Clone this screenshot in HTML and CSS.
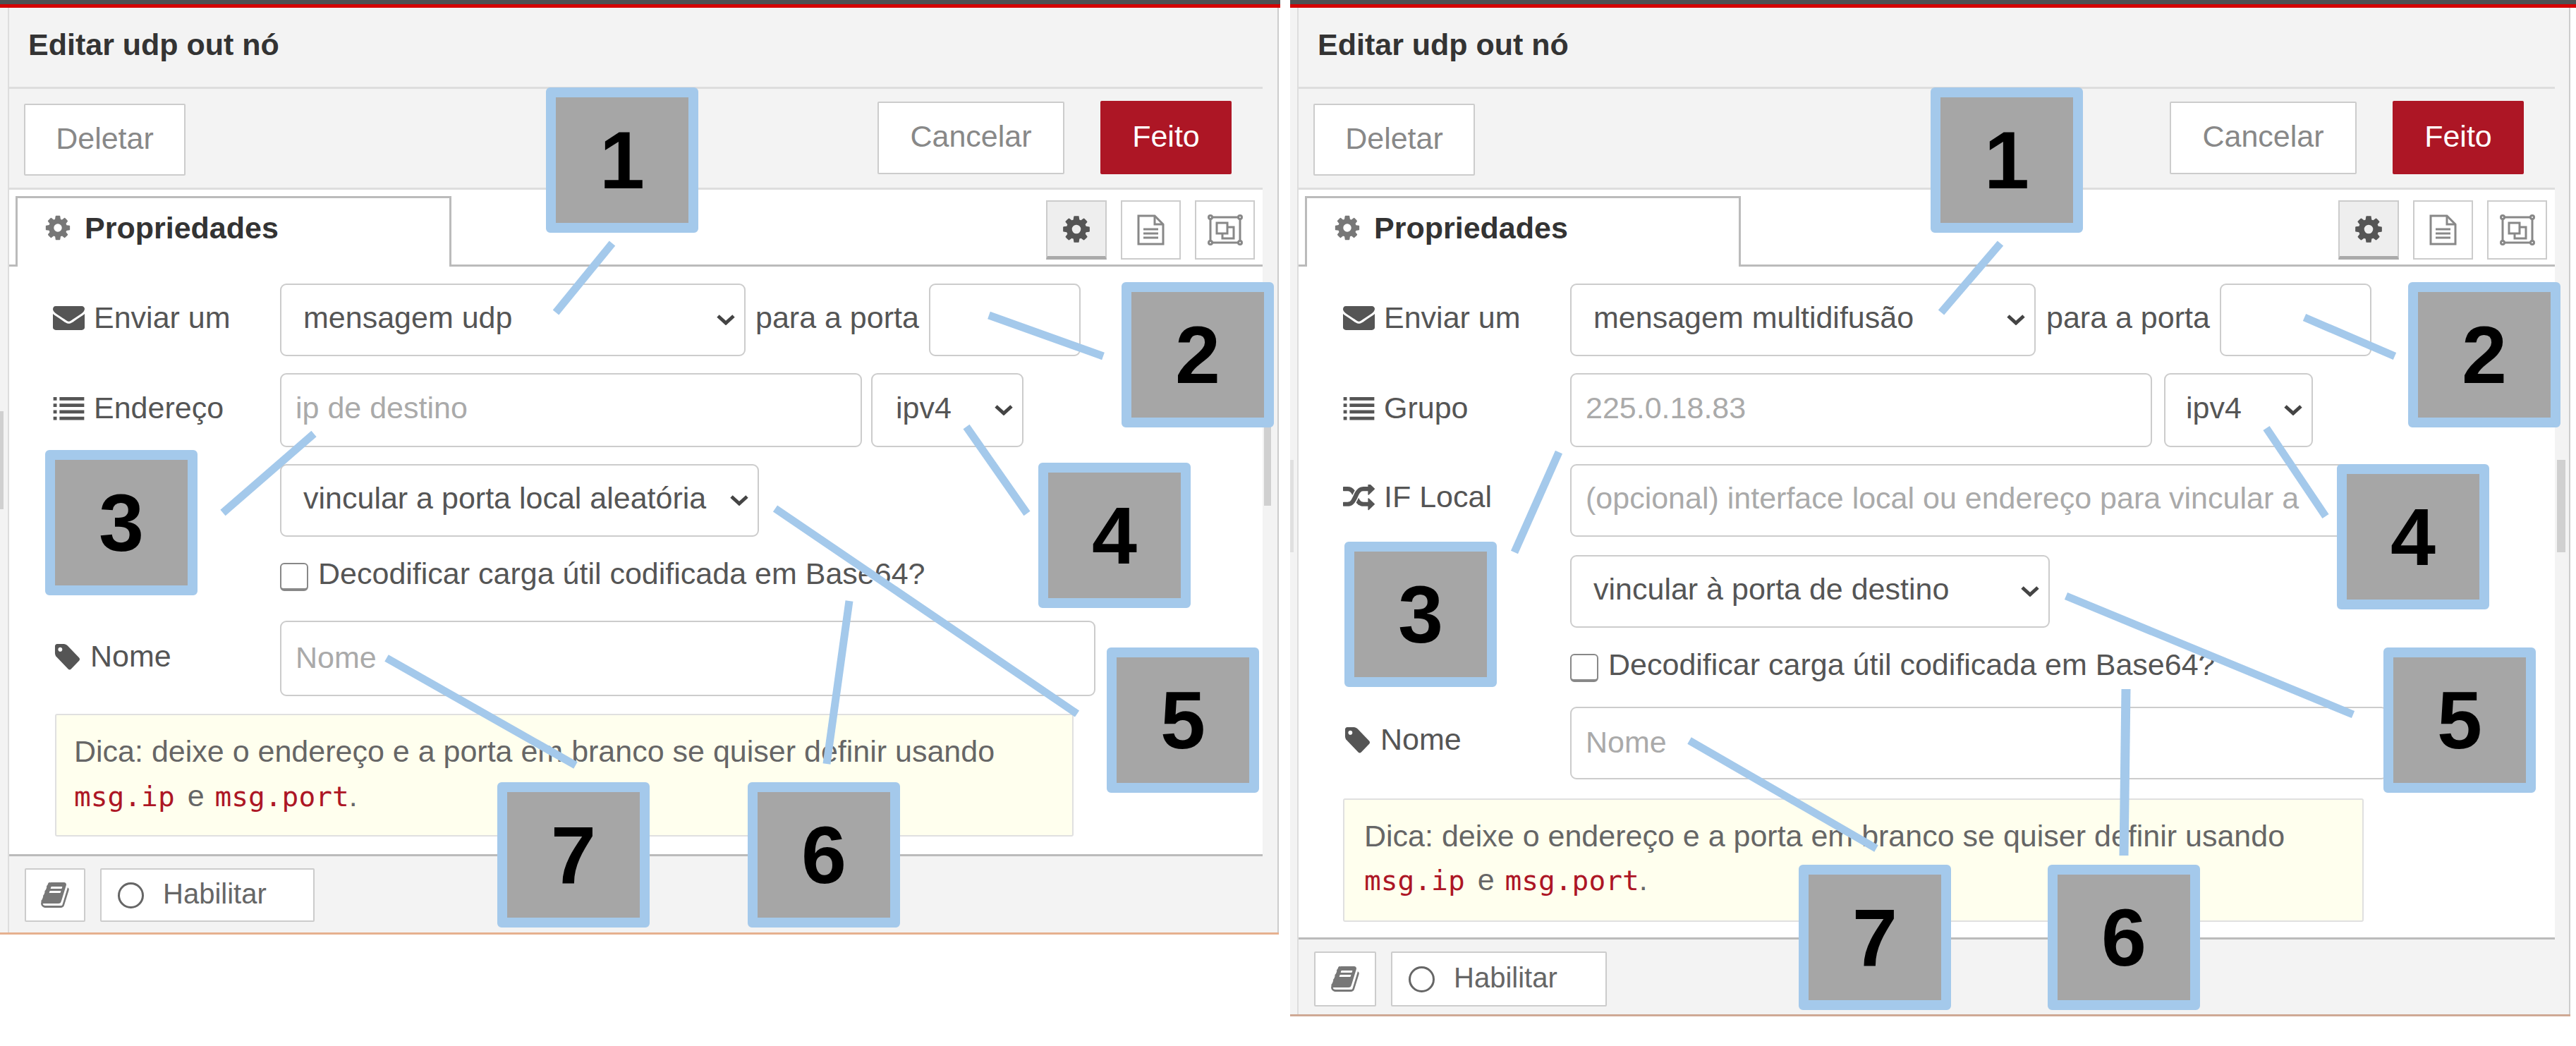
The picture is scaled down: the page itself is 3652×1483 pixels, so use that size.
FILE: index.html
```html
<!DOCTYPE html>
<html lang="pt">
<head>
<meta charset="utf-8">
<title>Editar udp out nó</title>
<link rel="stylesheet" href="styles.css">
</head>
<body>
<svg class="defs" width="0" height="0" aria-hidden="true">
  <symbol id="i-cog" viewBox="0 0 1792 1792"><path d="M1152 896q0-106-75-181t-181-75-181 75-75 181 75 181 181 75 181-75 75-181zm512-109v222q0 12-8 23t-20 13l-185 28q-19 54-39 91 35 50 107 138 10 12 10 25t-9 23q-27 37-99 108t-94 71q-12 0-26-9l-138-108q-44 23-91 38-16 136-29 186-7 28-36 28h-222q-14 0-24.500-8.500t-11.500-21.500l-28-184q-49-16-90-37l-141 107q-10 9-25 9-14 0-25-11-126-114-165-168-7-10-7-23 0-12 8-23 15-21 51-66.500t54-70.500q-27-50-41-99l-183-27q-13-2-21-12.500t-8-23.500v-222q0-12 8-23t19-13l186-28q14-46 39-92-40-57-107-138-10-12-10-24 0-10 9-23 26-36 98.500-107.500t94.500-71.500q13 0 26 10l138 107q44-23 91-38 16-136 29-186 7-28 36-28h222q14 0 24.500 8.500t11.500 21.500l28 184q49 16 90 37l142-107q9-9 24-9 13 0 25 10 129 119 165 170 7 8 7 22 0 12-8 23-15 21-51 66.500t-54 70.500q26 50 41 98l183 28q13 2 21 12.500t8 23.500z"/></symbol>
  <symbol id="i-env" viewBox="0 256 1792 1408" preserveAspectRatio="none"><path d="M1792 710v794q0 66-47 113t-113 47h-1472q-66 0-113-47t-47-113v-794q44 49 101 87 362 246 497 345 57 42 92.500 65.500t94.500 48 110 24.500h2q51 0 110-24.500t94.500-48 92.500-65.500q170-123 498-345 57-39 100-87zm0-294q0 79-49 151t-122 123q-376 261-468 325-10 7-42.500 30.500t-54 38-52 32.500-57.500 27-50 9h-2q-23 0-50-9t-57.500-27-52-32.500-54-38-42.500-30.500q-91-64-262-182.500t-205-142.500q-62-42-117-115.500t-55-136.500q0-78 41.500-130t118.500-52h1472q65 0 112.500 47t47.500 113z"/></symbol>
  <symbol id="i-list" viewBox="0 0 45 35"><path d="M0 1h5v5H0zM9 1h36v5H9zM0 10.500h5v5H0zM9 10.500h36v5H9zM0 20h5v5H0zM9 20h36v5H9zM0 29.500h5v5H0zM9 29.500h36v5H9z"/></symbol>
  <symbol id="i-tag" viewBox="0 128 1643 1536" preserveAspectRatio="none"><path d="M576 448q0-53-37.500-90.500t-90.500-37.500-90.500 37.500-37.500 90.500 37.500 90.500 90.500 37.500 90.500-37.500 37.500-90.500zm1067 576q0 53-37 90l-491 492q-39 37-91 37-53 0-90-37l-715-716q-38-37-64.500-101t-26.500-117v-416q0-52 38-90t90-38h416q53 0 117 26.500t102 64.500l715 714q37 39 37 91z"/></symbol>
  <symbol id="i-random" viewBox="0 128 1792 1536" preserveAspectRatio="none"><path d="M666 481q-60 92-137 273-22-45-37-72.500t-40.500-63.500-51-56.500-63-35-81.500-14.500h-224q-14 0-23-9t-9-23v-192q0-14 9-23t23-9h224q250 0 410 225zm1126 799q0 14-9 23l-320 320q-9 9-23 9-13 0-22.500-9.500t-9.500-22.500v-192q-32 0-85 .5t-81 1-73-1-71-5-64-10.500-63-18.500-58-28.500-59-40-55-53.500-56-69.500q59-93 136-273 22 45 37 72.500t40.500 63.500 51 56.500 63 35 81.500 14.500h256v-192q0-14 9-23t23-9q12 0 24 10l319 319q9 9 9 23zm0-896q0 14-9 23l-320 320q-9 9-23 9-13 0-22.500-9.500t-9.500-22.500v-192h-256q-48 0-87 15t-69 45-51 61.500-45 77.500q-32 62-78 171-29 66-49.500 111t-54 105-64 100-74 83-90 68.500-106.500 42-128 16.500h-224q-14 0-23-9t-9-23v-192q0-14 9-23t23-9h224q48 0 87-15t69-45 51-61.500 45-77.500q32-62 78-171 29-66 49.500-111t54-105 64-100 74-83 90-68.500 106.500-42 128-16.500h256v-192q0-14 9-23t23-9q12 0 24 10l319 319q9 9 9 23z"/></symbol>
  <symbol id="i-book" viewBox="60 128 1680 1536" preserveAspectRatio="none"><path d="M1703 478q40 57 18 129l-275 906q-19 64-76.500 107.500t-122.500 43.500h-923q-77 0-148.500-53.500t-99.500-131.500q-24-67-2-127 0-4 3-27t4-37q1-8-3-21.500t-3-19.500q2-11 8-21t16.500-23.500 16.500-23.500q23-38 45-91.500t30-91.500q3-10 .5-30t-.5-28q3-11 17-28t17-23q21-36 42-92t25-90q1-9-2.500-32t.5-28q4-13 22-30.500t22-22.500q19-26 42.500-84.500t27.500-96.500q1-8-3-25.500t-2-26.500q2-8 9-18t18-23 17-21q8-12 16.500-30.500t15-35 16-36 19.500-32 26.500-23.500 36-11.500 47.500 5.500l-1 3q38-9 51-9h761q74 0 114 56t18 130l-274 906q-36 119-71.500 153.500t-128.500 34.500h-869q-27 0-38 15-11 16-1 43 24 70 144 70h923q29 0 56-15.500t35-41.500l300-987q7-22 5-57 38 15 59 43zm-1064 2q-4 13 2 22.500t20 9.500h608q13 0 25.500-9.500t16.500-22.500l21-64q4-13-2-22.500t-20-9.500h-608q-13 0-25.500 9.500t-16.500 22.500zm-83 256q-4 13 2 22.500t20 9.500h608q13 0 25.500-9.500t16.500-22.500l21-64q4-13-2-22.500t-20-9.500h-608q-13 0-25.500 9.500t-16.500 22.500z"/></symbol>
  <symbol id="i-doc" viewBox="0 0 39 44"><path class="ln" d="M2 2h23l12 12v28H2z"/><path class="ln" d="M25 2v12h12"/><path class="ln" d="M9 21h21M9 27h21M9 33h21"/></symbol>
  <symbol id="i-group" viewBox="0 0 50 44"><path class="ln" d="M5 4h40M5 40h40M4 5v34M46 5v34"/><circle class="ln" cx="4" cy="4" r="2.500"/><circle class="ln" cx="46" cy="4" r="2.500"/><circle class="ln" cx="4" cy="40" r="2.500"/><circle class="ln" cx="46" cy="40" r="2.500"/><path class="ln" d="M13 12h15v15H13z"/><path class="ln" d="M28 18h9v16H21v-7"/></symbol>
  <symbol id="i-chev" viewBox="0 0 28 15"><path class="chev" d="M3 2l11 10L25 2"/></symbol>
</svg>

<main class="shot">
  <section class="panel panel-a">
    <div class="topbar"></div>
    <div class="frame">
      <div class="rail rail-l"><div class="thumb"></div></div>
      <div class="editor">
        <header class="head"><span class="title">Editar udp out nó</span></header>
        <div class="toolbar">
          <div class="btn btn-del"><span>Deletar</span></div>
          <div class="actions">
            <div class="btn btn-cancel"><span>Cancelar</span></div>
            <div class="btn btn-done"><span>Feito</span></div>
          </div>
        </div>
        <div class="tabs">
          <div class="tab"><svg class="ic-tab"><use href="#i-cog"/></svg><span>Propriedades</span></div>
          <div class="tabtools">
            <div class="tool tool-on"><svg class="ic-gear"><use href="#i-cog"/></svg></div>
            <div class="tool"><svg class="ic-doc"><use href="#i-doc"/></svg></div>
            <div class="tool"><svg class="ic-grp"><use href="#i-group"/></svg></div>
          </div>
        </div>
        <div class="form">
          <div class="row">
            <label class="lab"><svg class="ic-lab"><use href="#i-env"/></svg><span>Enviar um</span></label>
            <div class="field sel f-type"><span class="val">mensagem udp</span><svg class="chv"><use href="#i-chev"/></svg></div>
            <span class="inline">para a porta</span>
            <div class="field f-port"></div>
          </div>
          <div class="row row-tall">
            <label class="lab"><svg class="ic-lab"><use href="#i-list"/></svg><span>Endereço</span></label>
            <div class="field f-addr"><span class="ph">ip de destino</span></div>
            <div class="field sel f-ip"><span class="val">ipv4</span><svg class="chv"><use href="#i-chev"/></svg></div>
          </div>
          <div class="row row-off">
            <div class="lab"></div>
            <div class="field sel f-bind"><span class="val">vincular a porta local aleatória</span><svg class="chv"><use href="#i-chev"/></svg></div>
          </div>
          <div class="check"><span class="box"></span><span class="check-text">Decodificar carga útil codificada em Base64?</span></div>
          <div class="row row-name">
            <label class="lab lab-name"><svg class="ic-tag"><use href="#i-tag"/></svg><span>Nome</span></label>
            <div class="field f-name"><span class="ph">Nome</span></div>
          </div>
          <div class="tip">Dica: deixe o endereço e a porta em branco se quiser definir usando <code class="code-a">msg.ip</code> e <code class="code-b">msg.port</code>.</div>
        </div>
        <footer class="foot">
          <div class="btn btn-book"><svg class="ic-book"><use href="#i-book"/></svg></div>
          <div class="btn btn-enable"><span class="ring"></span><span>Habilitar</span></div>
        </footer>
      </div>
      <div class="rail rail-r"><div class="thumb"></div></div>
    </div>
  </section>

  <section class="panel panel-b">
    <div class="topbar"></div>
    <div class="frame">
      <div class="rail rail-l"><div class="thumb"></div></div>
      <div class="editor">
        <header class="head"><span class="title">Editar udp out nó</span></header>
        <div class="toolbar">
          <div class="btn btn-del"><span>Deletar</span></div>
          <div class="actions">
            <div class="btn btn-cancel"><span>Cancelar</span></div>
            <div class="btn btn-done"><span>Feito</span></div>
          </div>
        </div>
        <div class="tabs">
          <div class="tab"><svg class="ic-tab"><use href="#i-cog"/></svg><span>Propriedades</span></div>
          <div class="tabtools">
            <div class="tool tool-on"><svg class="ic-gear"><use href="#i-cog"/></svg></div>
            <div class="tool"><svg class="ic-doc"><use href="#i-doc"/></svg></div>
            <div class="tool"><svg class="ic-grp"><use href="#i-group"/></svg></div>
          </div>
        </div>
        <div class="form">
          <div class="row">
            <label class="lab"><svg class="ic-lab"><use href="#i-env"/></svg><span>Enviar um</span></label>
            <div class="field sel f-type"><span class="val">mensagem multidifusão</span><svg class="chv"><use href="#i-chev"/></svg></div>
            <span class="inline">para a porta</span>
            <div class="field f-port"></div>
          </div>
          <div class="row row-tall">
            <label class="lab"><svg class="ic-lab"><use href="#i-list"/></svg><span>Grupo</span></label>
            <div class="field f-addr"><span class="ph">225.0.18.83</span></div>
            <div class="field sel f-ip"><span class="val">ipv4</span><svg class="chv"><use href="#i-chev"/></svg></div>
          </div>
          <div class="row">
            <label class="lab lab-if"><svg class="ic-lab ic-rand"><use href="#i-random"/></svg><span>IF Local</span></label>
            <div class="field f-if"><span class="ph">(opcional) interface local ou endereço para vincular a</span></div>
          </div>
          <div class="row row-off">
            <div class="lab"></div>
            <div class="field sel f-bind"><span class="val">vincular à porta de destino</span><svg class="chv"><use href="#i-chev"/></svg></div>
          </div>
          <div class="check"><span class="box"></span><span class="check-text">Decodificar carga útil codificada em Base64?</span></div>
          <div class="row row-name">
            <label class="lab lab-name"><svg class="ic-tag"><use href="#i-tag"/></svg><span>Nome</span></label>
            <div class="field f-name"><span class="ph">Nome</span></div>
          </div>
          <div class="tip">Dica: deixe o endereço e a porta em branco se quiser definir usando <code class="code-a">msg.ip</code> e <code class="code-b">msg.port</code>.</div>
        </div>
        <footer class="foot">
          <div class="btn btn-book"><svg class="ic-book"><use href="#i-book"/></svg></div>
          <div class="btn btn-enable"><span class="ring"></span><span>Habilitar</span></div>
        </footer>
      </div>
      <div class="rail rail-r"><div class="thumb"></div></div>
    </div>
  </section>

  <div class="notes">
    <svg class="leaders" viewBox="0 0 3652 1483">
      <path d="M868 345L788 443"/>
      <path d="M1402 447L1564 505"/>
      <path d="M445 615L316 727"/>
      <path d="M1370 605L1456 728"/>
      <path d="M1099 721L1527 1012"/>
      <path d="M1204 852L1172 1083"/>
      <path d="M548 933L816 1085"/>
      <path d="M2836 345L2752 443"/>
      <path d="M3267 450L3395 505"/>
      <path d="M2210 641L2147 783"/>
      <path d="M3213 607L3297 732"/>
      <path d="M2929 845L3336 1013"/>
      <path class="thick" d="M3014 977L3011 1213"/>
      <path d="M2395 1050L2660 1203"/>
    </svg>
    <div class="tagbox a1">1</div>
    <div class="tagbox a2">2</div>
    <div class="tagbox a3">3</div>
    <div class="tagbox a4">4</div>
    <div class="tagbox a5">5</div>
    <div class="tagbox a6">6</div>
    <div class="tagbox a7">7</div>
    <div class="tagbox b1">1</div>
    <div class="tagbox b2">2</div>
    <div class="tagbox b3">3</div>
    <div class="tagbox b4">4</div>
    <div class="tagbox b5">5</div>
    <div class="tagbox b6">6</div>
    <div class="tagbox b7">7</div>
  </div>
</main>
</body>
</html>
```
FILE: styles.css
```css
* { box-sizing: border-box; }
html, body { margin: 0; padding: 0; background: #fff; }
body { width: 3652px; height: 1483px; overflow: hidden; font: 43px/48px "Liberation Sans", Arial, sans-serif; color: #555; }
.defs { position: absolute; }
.ln { fill: none; stroke: #888; stroke-width: 3; }
.chev { fill: none; stroke: #444; stroke-width: 5; }

.shot { position: relative; display: flex; gap: 14px; align-items: flex-start; width: 3652px; height: 1483px; }
.panel { display: flex; flex-direction: column; flex: none; }
.panel-a { width: 1815px; }
.panel-b { width: 1823px; }
.topbar { height: 11px; background: #d40000; border-top: 6px solid #4d5052; }

.frame { display: flex; align-self: flex-start; background: #f3f3f3; border-bottom: 3px solid #e6b08f; }
.panel-b .frame { border-bottom-color: #cfa995; }
.rail { flex: none; }
.thumb { background: #d0d0d0; }
.rail-l { width: 13px; border-right: 2px solid #ddd; }
.rail-l .thumb { width: 5px; height: 139px; margin-top: 572px; }
.rail-r { width: 23px; border-right: 2px solid #ccc; }
.rail-r .thumb { width: 10px; height: 117px; margin: 589px 0 0 2px; }
.panel-b .rail-l { width: 12px; }
.panel-b .rail-l .thumb { height: 131px; margin-top: 641px; background: #e0e0e0; }
.panel-b .rail-r { width: 22px; }
.panel-b .rail-r .thumb { width: 12px; height: 131px; margin: 641px 0 0 3px; }

.editor { display: flex; flex-direction: column; flex: none; width: 1777px; }
.panel-b .editor { width: 1781px; }

.head { display: flex; align-items: center; height: 115px; padding: 0 0 8px 27px; border-bottom: 3px solid #ddd; }
.title { font-weight: 700; color: #333; }

.toolbar { display: flex; justify-content: space-between; align-items: flex-start; height: 143px; padding: 0 44px 0 21px; border-bottom: 3px solid #ddd; }
.actions { display: flex; gap: 51px; margin-top: 18px; }
.btn { display: flex; align-items: center; justify-content: center; background: #fff; border: 2px solid #ccc; border-radius: 2px; color: #888; flex: none; }
.btn > span { padding-bottom: 5px; }
.btn-del { width: 229px; height: 102px; margin-top: 21px; }
.btn-cancel { width: 265px; height: 103px; }
.btn-done { width: 186px; height: 104px; margin-top: -1px; background: #ad1625; border-color: #ad1625; color: #fff; }

.tabs { display: flex; justify-content: space-between; align-items: flex-start; height: 109px; padding: 9px 11px 0 9px; background: #fff; border-bottom: 3px solid #bbb; }
.tab { display: flex; align-items: center; gap: 18px; width: 618px; height: 100px; padding: 0 0 14px 37px; background: #fff; border: 3px solid #bbb; border-bottom: 0; font-weight: 700; color: #333; }
.ic-tab { width: 40px; height: 40px; fill: #777; }
.tabtools { display: flex; gap: 20px; margin-top: 6px; }
.tool { display: flex; align-items: center; justify-content: center; width: 85px; height: 84px; background: #fff; border: 2px solid #ccc; }
.tool-on { width: 86px; background: #eee; border-bottom: 5px solid #aaa; }
.ic-gear { width: 44px; height: 44px; fill: #555; }
.ic-doc { width: 39px; height: 44px; }
.ic-grp { width: 50px; height: 44px; }

.form { display: flex; flex-direction: column; padding: 24px 0 0 62px; background: #fff; height: 833px; }
.panel-b .form { padding-left: 63px; height: 951px; }
.row { display: flex; align-items: center; height: 103px; margin-bottom: 24px; flex: none; }
.row-tall { height: 105px; }
.row-off { margin-bottom: 0; }
.panel-b .row-off { margin-top: 2px; }
.lab { display: flex; align-items: center; gap: 13px; width: 322px; flex: none; padding-bottom: 8px; }
.lab-if { padding-bottom: 11px; }
.lab-name { gap: 15px; padding-bottom: 7px; }
.panel-b .lab-name { padding-bottom: 11px; }
.ic-lab { width: 45px; height: 34px; fill: #555; flex: none; margin-top: 2px; }
.ic-rand { height: 37px; }
.ic-tag { width: 38px; height: 37px; fill: #555; flex: none; margin-top: 2px; }

.field { display: flex; align-items: center; justify-content: space-between; flex: none; height: 100%; background: #fff; border: 2px solid #ccc; border-radius: 9px; }
.val, .ph { padding-bottom: 7px; white-space: nowrap; }
.val { padding-left: 31px; }
.ph { padding-left: 20px; color: #aaa; }
.chv { width: 28px; height: 15px; flex: none; margin-right: 12px; }
.inline { margin: 0 14px; padding-bottom: 7px; white-space: nowrap; }
.f-type { width: 660px; }
.f-port { width: 215px; }
.f-addr { width: 825px; margin-right: 13px; }
.f-ip { width: 216px; }
.f-ip .val { padding-left: 33px; }
.f-bind { width: 679px; }
.f-name { width: 1156px; }
.f-if { width: 1159px; }
.panel-b .f-addr { margin-right: 17px; }
.panel-b .f-ip { width: 211px; }
.panel-b .f-ip .val { padding-left: 29px; }
.panel-b .f-bind { width: 680px; }
.panel-b .f-name { width: 1159px; }
.panel-b .inline { margin: 0 14px 0 15px; }

.check { display: flex; align-items: center; gap: 14px; height: 40px; margin: 37px 0 42px 322px; white-space: nowrap; flex: none; }
.panel-b .check { margin-bottom: 35px; }
.check-text { padding-bottom: 10px; }
.box { width: 40px; height: 40px; flex: none; background: #fff; border: 2px solid #888; border-bottom-width: 4px; border-radius: 6px; }
.row-name { height: 107px; margin-bottom: 25px; }
.panel-b .row-name { height: 103px; margin-bottom: 27px; }
.row-name .ph { padding-bottom: 3px; }

.tip { width: 1444px; height: 174px; margin-left: 3px; padding: 20px 60px 0 25px; background: #ffe; border: 2px solid #e0e0e0; border-radius: 3px; color: #666; line-height: 63px; flex: none; }
.panel-b .tip { width: 1447px; height: 175px; margin-left: 0; padding-left: 28px; line-height: 62px; }
code { font: 39.500px "DejaVu Sans Mono", "Liberation Mono", monospace; color: #ad1625; }
.code-a { margin-right: 6px; }
.code-b { margin-left: 3px; }

.foot { display: flex; gap: 21px; height: 111px; padding: 17px 0 0 22px; background: #f3f3f3; border-top: 3px solid #bbb; }
.panel-b .foot { height: 109px; }
.btn-book { width: 86px; height: 76px; color: #777; }
.btn-enable { justify-content: flex-start; gap: 27px; width: 304px; height: 76px; padding-left: 23px; color: #666; font-size: 40px; }
.panel-b .btn-book { width: 88px; height: 78px; }
.panel-b .btn-enable { width: 306px; height: 78px; }
.ic-book { width: 40px; height: 36px; fill: #777; }
.ring { width: 37px; height: 37px; padding: 0; flex: none; border: 3px solid #666; border-radius: 50%; }

.notes { position: absolute; inset: 0; }
.leaders { position: absolute; left: 0; top: 0; width: 3652px; height: 1483px; fill: none; stroke: #a4c9eb; stroke-width: 11; }
.leaders .thick { stroke-width: 13; }
.tagbox { position: absolute; display: flex; align-items: center; justify-content: center; width: 216px; height: 206px; background: #a6a6a6; border: 14px solid #a4c9eb; border-radius: 6px; color: #000; font: 700 115px/1 "Liberation Sans", Arial, sans-serif; }
.a1 { left: 774px; top: 124px; }
.a2 { left: 1590px; top: 400px; }
.a3 { left: 64px; top: 638px; }
.a4 { left: 1472px; top: 656px; }
.a5 { left: 1569px; top: 918px; }
.a6 { left: 1060px; top: 1109px; }
.a7 { left: 705px; top: 1109px; }
.b1 { left: 2737px; top: 124px; }
.b2 { left: 3414px; top: 400px; }
.b3 { left: 1906px; top: 768px; }
.b4 { left: 3313px; top: 658px; }
.b5 { left: 3379px; top: 918px; }
.b6 { left: 2903px; top: 1226px; }
.b7 { left: 2550px; top: 1226px; }
```
